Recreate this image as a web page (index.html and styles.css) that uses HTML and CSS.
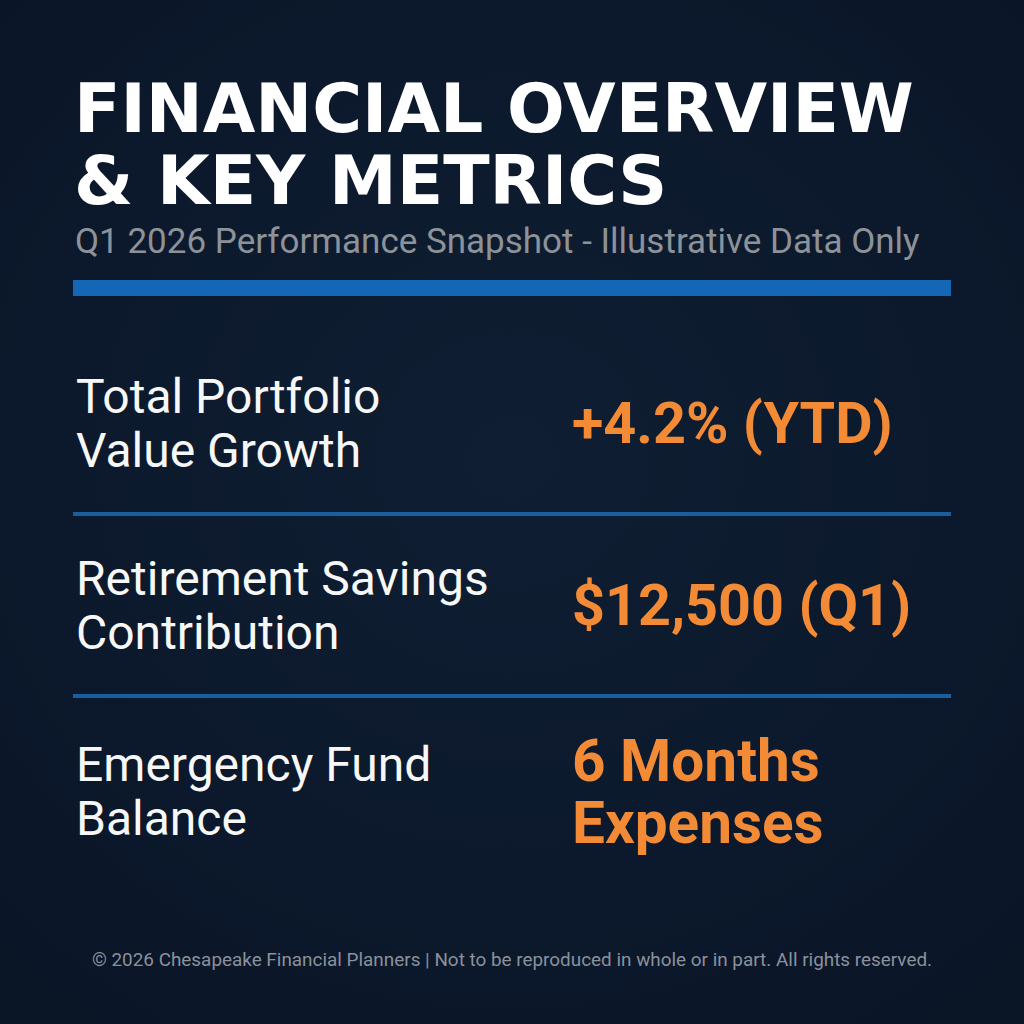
FILE: index.html
```html
<!DOCTYPE html>
<html lang="en">
<head>
<meta charset="utf-8">
<title>Financial Overview &amp; Key Metrics</title>
<link rel="stylesheet" href="styles.css">
</head>
<body>
<main class="page">
  <header class="head">
    <h1 class="title">FINANCIAL OVERVIEW<br>&amp; KEY METRICS</h1>
    <p class="subtitle">Q1 2026 Performance Snapshot - Illustrative Data Only</p>
    <div class="bar"></div>
  </header>
  <section class="metrics">
    <div class="metric">
      <div class="label">Total Portfolio<br>Value Growth</div>
      <div class="value">+4.2% (YTD)</div>
    </div>
    <div class="metric">
      <div class="label">Retirement Savings<br>Contribution</div>
      <div class="value">$12,500 (Q1)</div>
    </div>
    <div class="metric metric-last">
      <div class="label">Emergency Fund<br>Balance</div>
      <div class="value">6 Months<br>Expenses</div>
    </div>
  </section>
  <footer class="foot">© 2026 Chesapeake Financial Planners | Not to be reproduced in whole or in part. All rights reserved.</footer>
</main>
</body>
</html>
```
FILE: styles.css
```css
html, body {
  margin: 0;
  padding: 0;
}
body {
  background: #0c192c;
  font-family: Roboto, "Liberation Sans", sans-serif;
}
.page {
  width: 1024px;
  height: 1024px;
  box-sizing: border-box;
  padding: 0 73px 53px 73px;
  display: flex;
  flex-direction: column;
  background: radial-gradient(ellipse 75% 70% at 50% 45%, #0f1e33 0%, #0c192c 60%, #0a1526 100%);
}
.head {
  padding-top: 73px;
}
.title {
  margin: 0;
  padding-left: 1px;
  font-family: "DejaVu Sans", sans-serif;
  font-weight: 700;
  font-size: 68px;
  line-height: 72px;
  color: #ffffff;
  letter-spacing: 0;
}
.subtitle {
  margin: 4px 0 0 0;
  padding-left: 2px;
  font-size: 35px;
  line-height: 41px;
  color: #8d9299;
}
.bar {
  margin-top: 18px;
  height: 16px;
  background: #1467b5;
}
.metrics {
  margin-top: 38px;
}
.metric {
  display: grid;
  grid-template-columns: 499px 1fr;
  align-items: center;
  padding: 36px 0 34px 0;
  border-bottom: 4px solid #1a5e9e;
}
.metric-last {
  border-bottom: none;
  padding-top: 32px;
}
.label {
  padding-left: 3px;
  font-size: 48px;
  line-height: 54px;
  color: #f7f7f7;
}
.value {
  font-size: 57.5px;
  line-height: 62px;
  font-weight: 700;
  color: #f28a36;
}
.metric-last .value {
  font-size: 58.5px;
}
.foot {
  margin-top: auto;
  text-align: center;
  font-size: 18.9px;
  line-height: 23px;
  color: #8a919b;
}
```
